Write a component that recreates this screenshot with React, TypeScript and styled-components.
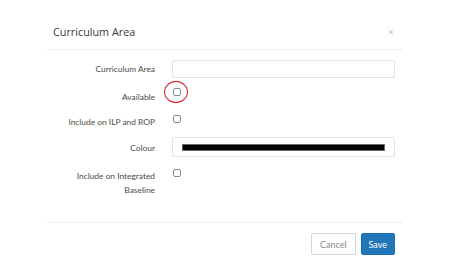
import React from "react";
import styled, { createGlobalStyle } from "styled-components";

const Global = createGlobalStyle`
  html, body { margin: 0; padding: 0; background: #fff; }
  body { font-family: "Open Sans", "Liberation Sans", sans-serif; color: #333; }
  * { box-sizing: border-box; }
`;

const Page = styled.div`
  width: 449px;
  height: 260px;
  padding: 0 46px;
  background: #fff;
`;

const Modal = styled.div`
  width: 357px;
  display: flex;
  flex-direction: column;
`;

const Header = styled.div`
  height: 50px;
  display: flex;
  align-items: flex-start;
  justify-content: space-between;
  padding: 24px 9px 0 7px;
  border-bottom: 1px solid #eceef0;
`;

const Title = styled.h4`
  margin: 0;
  font-size: 10.8px;
  font-weight: 400;
  line-height: 16px;
  color: #3a3a3a;
`;

const Close = styled.span`
  font-size: 11px;
  line-height: 11px;
  margin-top: 2px;
  color: #c4c4c4;
`;

const Body = styled.div`
  padding: 10px 8px 0 7px;
  height: 173px;
  border-bottom: 1px solid #eceef0;
  display: grid;
  grid-template-columns: 102px 1fr;
  column-gap: 17px;
  align-content: start;
`;

const Label = styled.label<{ $top: number }>`
  font-family: Lato, "Open Sans", sans-serif;
  font-size: 8.4px;
  line-height: 14px;
  color: #4a4a4a;
  text-align: right;
  padding-top: ${(p) => p.$top}px;
`;

const Control = styled.div<{ $h: number }>`
  height: ${(p) => p.$h}px;
`;

const TextInput = styled.div<{ $h: number }>`
  height: ${(p) => p.$h}px;
  border: 1px solid #dfe3e8;
  border-radius: 2px;
  background: #fff;
`;

const ColourInput = styled(TextInput)`
  padding: 6px 9px 0 9px;
`;

const ColourBar = styled.div`
  height: 7px;
  background: #000;
  border: 1px solid #6a6a6a;
`;

const CheckWrap = styled.div`
  position: relative;
  width: 8px;
  height: 8px;
  margin-left: 1px;
`;

const Box = styled.div`
  width: 8px;
  height: 8px;
  border: 1px solid #8a8a8a;
  border-radius: 2px;
  background: #fff;
`;

const Ring = styled.div`
  position: absolute;
  left: -9px;
  top: -7px;
  width: 24px;
  height: 22px;
  border: 1px solid #e0141b;
  border-radius: 50%;
`;

const Footer = styled.div`
  display: flex;
  justify-content: flex-end;
  gap: 5px;
  padding: 10px 8px 0 0;
`;

const Button = styled.button<{ $primary?: boolean }>`
  height: 22px;
  padding: 0 ${(p) => (p.$primary ? 7 : 8)}px;
  font-family: Lato, "Open Sans", sans-serif;
  font-size: 9px;
  border-radius: 2px;
  border: 1px solid ${(p) => (p.$primary ? "#1f6fae" : "#d2d6da")};
  background: ${(p) => (p.$primary ? "#2277b9" : "#fff")};
  color: ${(p) => (p.$primary ? "#fff" : "#8a8a8a")};
`;

export default function App() {
  return (
    <Page>
      <Global />
      <Modal>
        <Header>
          <Title>Curriculum Area</Title>
          <Close>×</Close>
        </Header>
        <Body>
          <Label $top={2}>Curriculum Area</Label>
          <Control $h={28}>
            <TextInput $h={18} />
          </Control>

          <Label $top={2}>Available</Label>
          <Control $h={27}>
            <CheckWrap>
              <Box />
              <Ring />
            </CheckWrap>
          </Control>

          <Label $top={0}>Include on ILP and ROP</Label>
          <Control $h={22}>
            <CheckWrap>
              <Box />
            </CheckWrap>
          </Control>

          <Label $top={4}>Colour</Label>
          <Control $h={32}>
            <ColourInput $h={20}>
              <ColourBar />
            </ColourInput>
          </Control>

          <Label $top={0}>
            Include on Integrated
            <br />
            Baseline
          </Label>
          <Control $h={30}>
            <CheckWrap>
              <Box />
            </CheckWrap>
          </Control>
        </Body>
        <Footer>
          <Button>Cancel</Button>
          <Button $primary>Save</Button>
        </Footer>
      </Modal>
    </Page>
  );
}
